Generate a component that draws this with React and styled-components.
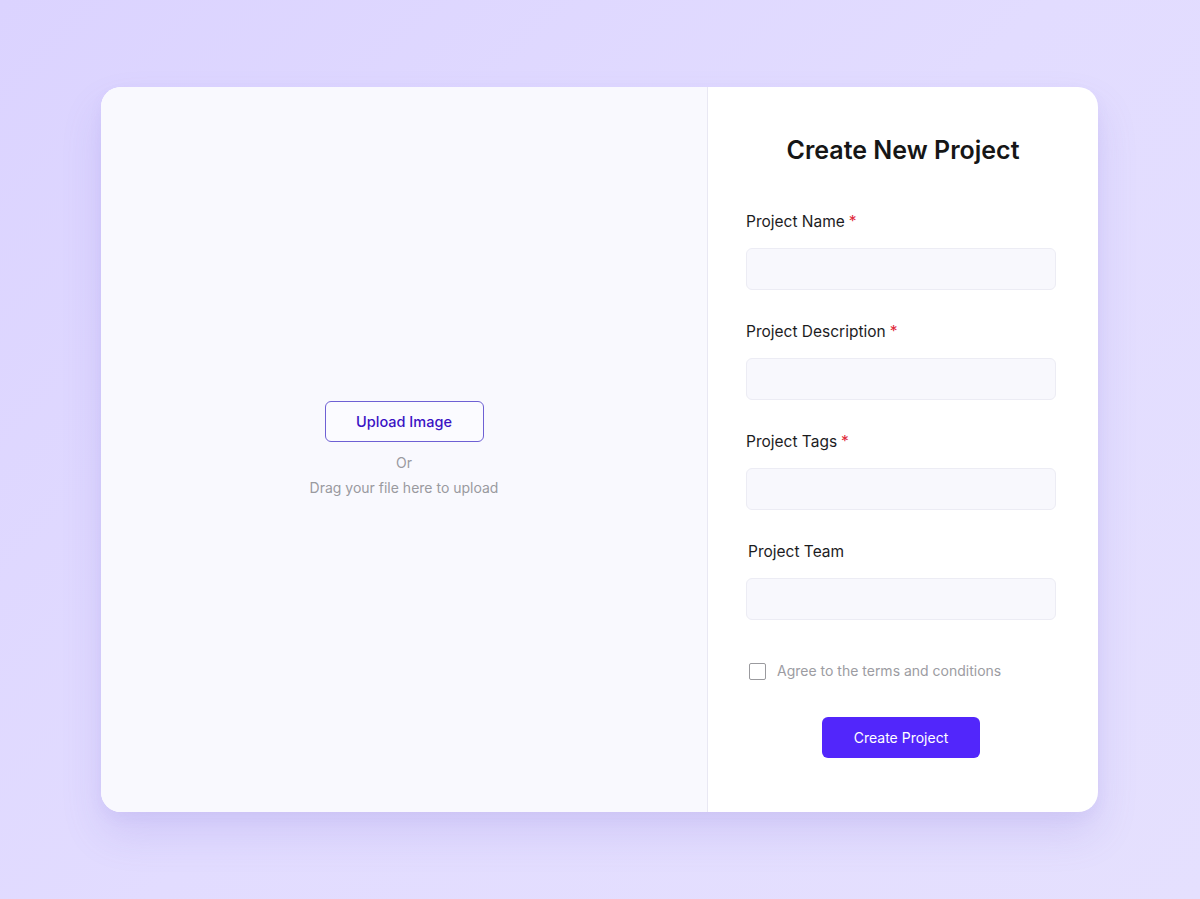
import React from "react";
import styled, { createGlobalStyle } from "styled-components";

const GlobalStyle = createGlobalStyle`
  * { box-sizing: border-box; }
  html, body { margin: 0; padding: 0; }
  body {
    font-family: Inter, "Noto Sans", "Liberation Sans", sans-serif;
    background: linear-gradient(135deg, #dbd3ff 0%, #e2dcff 50%, #e5e0fe 100%);
    min-height: 100vh;
  }
`;

const Page = styled.div`
  width: 1200px;
  height: 899px;
  padding: 87px 102px 87px 101px;
  display: flex;
`;

const Card = styled.div`
  flex: 1;
  display: flex;
  border-radius: 20px;
  overflow: hidden;
  background: #ffffff;
  box-shadow: 0 22px 40px rgba(120, 100, 210, 0.16), 0 6px 14px rgba(120, 100, 210, 0.06);
`;

const UploadPane = styled.div`
  width: 607px;
  background: #f9f9fe;
  border-right: 1px solid #e9e8f3;
  display: flex;
  flex-direction: column;
  align-items: center;
  justify-content: center;
`;

const OutlineButton = styled.button`
  width: 159px;
  height: 41px;
  border: 1px solid #6e60d4;
  border-radius: 6px;
  background: #fbfbff;
  color: #3a12c4;
  font-family: inherit;
  font-size: 14.5px;
  font-weight: 450;
  cursor: pointer;
`;

const Hint = styled.div`
  color: #9a9a9f;
  font-size: 14px;
  line-height: 20px;
  margin-top: ${(p) => p.$gap || 0}px;
`;

const FormPane = styled.div`
  flex: 1;
  display: flex;
  flex-direction: column;
  padding: 47px 42px 0 38px;
`;

const Title = styled.h1`
  margin: 0;
  text-align: center;
  font-size: 25px;
  line-height: 32px;
  font-weight: 600;
  color: #161616;
  padding-left: 4px;
`;

const Fields = styled.div`
  display: flex;
  flex-direction: column;
  gap: 32px;
  margin-top: 46px;
`;

const Field = styled.label`
  display: flex;
  flex-direction: column;
  gap: 16px;
`;

const LabelText = styled.span`
  font-size: 15.5px;
  line-height: 20px;
  font-weight: 420;
  color: #1c1c1e;
  padding-left: ${(p) => p.$indent || 0}px;
`;

const Required = styled.span`
  color: #e0283a;
  margin-left: 4px;
`;

const Input = styled.input`
  height: 42px;
  width: 100%;
  border: 1px solid #ececf4;
  border-radius: 6px;
  background: #f8f8fd;
  padding: 0 12px;
  font-family: inherit;
  font-size: 15px;
  outline: none;
`;

const CheckRow = styled.label`
  display: flex;
  align-items: center;
  gap: 11px;
  margin-top: 41px;
  padding-left: 3px;
  line-height: 20px;
  font-size: 14px;
  color: #9c9ca2;
  cursor: pointer;
`;

const Box = styled.span`
  width: 17px;
  height: 17px;
  border: 1.5px solid #9a9a9e;
  border-radius: 2px;
  background: #ffffff;
`;

const PrimaryButton = styled.button`
  align-self: center;
  margin-top: 36px;
  width: 158px;
  height: 41px;
  border: none;
  border-radius: 6px;
  background: #5226fb;
  color: #ffffff;
  font-family: inherit;
  font-size: 14px;
  font-weight: 420;
  cursor: pointer;
`;

const fields = [
  { label: "Project Name", required: true },
  { label: "Project Description", required: true },
  { label: "Project Tags", required: true },
  { label: "Project Team", required: false, indent: 2 },
];

export default function App() {
  return (
    <>
      <GlobalStyle />
      <Page>
        <Card>
          <UploadPane>
            <OutlineButton>Upload Image</OutlineButton>
            <Hint $gap={11}>Or</Hint>
            <Hint $gap={5}>Drag your file here to upload</Hint>
          </UploadPane>
          <FormPane>
            <Title>Create New Project</Title>
            <Fields>
              {fields.map((f) => (
                <Field key={f.label}>
                  <LabelText $indent={f.indent}>
                    {f.label}
                    {f.required && <Required>*</Required>}
                  </LabelText>
                  <Input type="text" />
                </Field>
              ))}
            </Fields>
            <CheckRow>
              <Box />
              Agree to the terms and conditions
            </CheckRow>
            <PrimaryButton>Create Project</PrimaryButton>
          </FormPane>
        </Card>
      </Page>
    </>
  );
}
